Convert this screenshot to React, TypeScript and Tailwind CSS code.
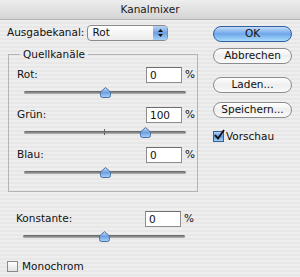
import React from "react";

const font = { fontFamily: '"DejaVu Sans", "Lucida Grande", sans-serif' };

function Thumb() {
  return (
    <svg width="11" height="11" viewBox="0 0 11 11" className="block">
      <defs>
        <linearGradient id="tg" x1="0" y1="0" x2="0" y2="1">
          <stop offset="0" stopColor="#c9dcf4" />
          <stop offset="0.5" stopColor="#6f9fe0" />
          <stop offset="1" stopColor="#a8d4f8" />
        </linearGradient>
      </defs>
      <path d="M5.5 0.5 L10.5 5 V8.5 Q10.5 10.5 8.5 10.5 H2.5 Q0.5 10.5 0.5 8.5 V5 Z" fill="url(#tg)" stroke="#4c6fa6" strokeWidth="1" />
    </svg>
  );
}

function Slider({ value, tick }: { value: number; tick?: boolean }) {
  const pct = 50 + (value / 200) * 50;
  return (
    <div className="relative h-[24px] ml-[15px] w-[162px]">
      <div className="absolute left-0 right-0 top-[8px] h-[3px] rounded-full bg-gradient-to-b from-[#5e5e5e] to-[#b8b8b8]" />
      {tick && <div className="absolute left-[80px] top-[6px] w-px h-[6px] bg-[#666]" />}
      <div className="absolute top-[4px]" style={{ left: `calc(${pct}% - 5.5px)` }}>
        <Thumb />
      </div>
    </div>
  );
}

function NumRow({ label, value }: { label: string; value: string }) {
  return (
    <div className="flex items-center h-[16px]">
      <span className="ml-[8px] w-[129px] text-[10.5px] text-[#111]">{label}</span>
      <div className="w-[36px] h-[16px] bg-white border border-[#8d8d8d] border-t-[#6e6e6e] flex items-center pl-[3px] text-[10.5px] leading-none text-[#111]">
        {value}
      </div>
      <span className="ml-[3px] text-[10.5px] text-[#111]">%</span>
    </div>
  );
}

function Btn({ children, primary }: { children: React.ReactNode; primary?: boolean }) {
  return (
    <div
      className={
        "h-[16px] w-[79px] rounded-full flex items-center justify-center text-[10.5px] text-[#111] border " +
        (primary
          ? "border-[#2f5f9e] bg-gradient-to-b from-[#c3dcf8] via-[#6ea6ea] to-[#a9dcfb]"
          : "border-[#8c8c8c] bg-gradient-to-b from-[#ffffff] via-[#eeeeee] to-[#fafafa]")
      }
    >
      {children}
    </div>
  );
}

export default function App() {
  return (
    <div
      className="w-[300px] h-[277px] overflow-hidden bg-[repeating-linear-gradient(to_bottom,#eeeeee_0px,#eeeeee_2px,#e7e7e7_2px,#e7e7e7_4px)]"
      style={font}
    >
      <div className="h-[20px] flex items-center justify-center bg-gradient-to-b from-[#eeeeee] to-[#d4d4d4] border-b border-[#b4b4b4] text-[10.5px] text-[#1a1a1a]">
        Kanalmixer
      </div>
      <div className="flex">
        <div className="ml-[7px] w-[191px]">
          <div className="mt-[5px] flex items-center h-[16px]">
            <span className="text-[10.5px] text-[#111]">Ausgabekanal:</span>
            <div className="ml-[3px] w-[81px] h-[16px] rounded-[4px] border border-[#8a8a8a] bg-gradient-to-b from-[#ffffff] to-[#ececec] flex items-stretch overflow-hidden">
              <span className="flex-1 pl-[4px] flex items-center text-[10.5px] text-[#111]">Rot</span>
              <div className="w-[14px] bg-gradient-to-b from-[#b8d3f4] via-[#6b9fe2] to-[#a6d2f7] flex flex-col items-center justify-center gap-[2px]">
                <svg width="5" height="3" viewBox="0 0 5 3"><path d="M0 3 L2.5 0 L5 3 Z" fill="#111" /></svg>
                <svg width="5" height="3" viewBox="0 0 5 3"><path d="M0 0 L2.5 3 L5 0 Z" fill="#111" /></svg>
              </div>
            </div>
          </div>
          <fieldset className="mt-[7px] ml-[1px] w-[190px] border border-[#b4b4b4] pb-[4px]">
            <legend className="ml-[11px] px-[3px] text-[10.5px] text-[#111] leading-[13px]">Quellkanäle</legend>
            <div className="mt-[6px]">
              <NumRow label="Rot:" value="0" />
              <Slider value={0} />
              <NumRow label="Grün:" value="100" />
              <Slider value={100} tick />
              <NumRow label="Blau:" value="0" />
              <Slider value={0} />
            </div>
          </fieldset>
          <div className="mt-[19px] ml-[1px]">
            <NumRow label="Konstante:" value="0" />
            <Slider value={0} />
          </div>
          <div className="mt-[8px] flex items-center">
            <div className="w-[11px] h-[11px] border border-[#8a8a8a] bg-gradient-to-b from-[#ffffff] to-[#e3e3e3]" />
            <span className="ml-[4px] text-[10.5px] text-[#111]">Monochrom</span>
          </div>
        </div>
        <div className="ml-[15px] w-[79px] mt-[6px] flex flex-col">
          <Btn primary>OK</Btn>
          <div className="mt-[6px]"><Btn>Abbrechen</Btn></div>
          <div className="mt-[13px]"><Btn>Laden...</Btn></div>
          <div className="mt-[9px]"><Btn>Speichern...</Btn></div>
          <div className="mt-[11px] flex items-center">
            <div className="w-[11px] h-[11px] border border-[#2f5f9e] bg-gradient-to-b from-[#b8d3f4] via-[#5e94dc] to-[#a6d2f7] relative">
              <svg width="12" height="12" viewBox="0 0 12 12" className="absolute left-[-1px] top-[-3px]">
                <path d="M2 6 L5 9.5 L11 1" fill="none" stroke="#111" strokeWidth="1.8" />
              </svg>
            </div>
            <span className="ml-[2px] text-[10.5px] text-[#111]">Vorschau</span>
          </div>
        </div>
      </div>
    </div>
  );
}
